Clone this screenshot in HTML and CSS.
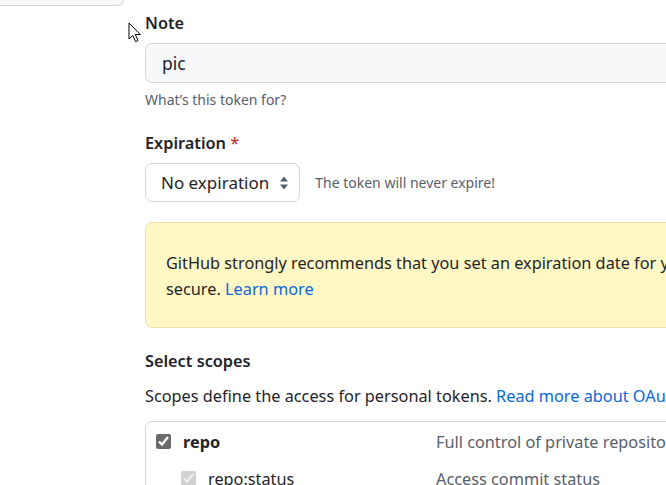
FILE: index.html
```html
<!DOCTYPE html>
<html lang="en">
<head>
<meta charset="utf-8">
<title>New personal access token</title>
<link rel="stylesheet" href="styles.css">
</head>
<body>
<div class="layout">
  <aside class="sidebar"><div class="side-menu"></div></aside>
  <main class="main">
    <div class="form-group">
      <label class="label">Note</label>
      <div class="input">pic</div>
      <p class="note">What’s this token for?</p>
    </div>
    <div class="form-group">
      <label class="label">Expiration <span class="req">*</span></label>
      <div class="exp-row">
        <div class="select">
          <span>No expiration</span>
          <svg class="sel-icon" width="10" height="16" viewBox="0 0 10 16"><path d="M5 1.5 L9 6.5 H1 Z M5 14.5 L9 9.5 H1 Z" fill="#57606a"/></svg>
        </div>
        <span class="exp-note">The token will never expire!</span>
      </div>
    </div>
    <div class="flash">GitHub strongly recommends that you set an expiration date for your token to help keep your information<br>secure. <a href="#">Learn more</a></div>
    <h3 class="scopes-title">Select scopes</h3>
    <p class="scopes-desc">Scopes define the access for personal tokens. <a href="#">Read more about OAuth scopes.</a></p>
    <div class="scopes">
      <div class="scope-row">
        <div class="scope-name"><input type="checkbox" checked class="cb"><strong>repo</strong></div>
        <div class="scope-desc">Full control of private repositories</div>
      </div>
      <div class="scope-row sub">
        <div class="scope-name"><input type="checkbox" checked disabled class="cb"><span>repo:status</span></div>
        <div class="scope-desc">Access commit status</div>
      </div>
    </div>
  </main>
</div>
<svg class="cursor" width="13" height="21" viewBox="0 0 13 21"><path d="M1 1 V17 L4.8 13.4 L7.6 19.6 L10 18.6 L7.3 12.5 H12.3 Z" fill="#fff" stroke="#000" stroke-width="1" stroke-linejoin="round"/></svg>
</body>
</html>
```
FILE: styles.css
```css
html, body {
  margin: 0;
  padding: 0;
  background: #fff;
  overflow: hidden;
}
body {
  font-family: "Segoe UI", "Noto Sans", "Liberation Sans", sans-serif;
  font-size: 16.3px;
  color: #1f2328;
  width: 666px;
  height: 485px;
  position: relative;
}
.layout {
  display: flex;
  gap: 21px;
  width: 1400px;
}
.sidebar {
  width: 124px;
  flex: none;
}
.side-menu {
  height: 5px;
  background: #f6f8fa;
  border: 1px solid #d0d7de;
  border-top: none;
  border-left: none;
  border-bottom-right-radius: 7px;
}
.main {
  width: 1000px;
  padding-top: 10px;
}
.label {
  display: block;
  font-weight: 600;
  line-height: 26px;
  margin-bottom: 7px;
}
.req {
  color: #cf222e;
  font-weight: 400;
}
.input {
  height: 38px;
  box-sizing: content-box;
  border: 1px solid #d0d7de;
  border-radius: 7px;
  background: #f6f8fa;
  padding: 0 16px;
  line-height: 38px;
  font-size: 17.5px;
}
.note {
  margin: 6px 0 0;
  font-size: 14px;
  line-height: 22px;
  color: #57606a;
  height: 41px;
}
.exp-row {
  display: flex;
  align-items: center;
  gap: 15px;
  margin-top: 2px;
}
.select {
  display: flex;
  align-items: center;
  gap: 10px;
  height: 37px;
  border: 1px solid #d0d7de;
  border-radius: 7px;
  padding: 0 10px 0 15px;
  background: #fff;
  width: fit-content;
  font-size: 17px;
}
.sel-icon {
  display: block;
}
.exp-note {
  font-size: 14px;
  color: #57606a;
}
.flash {
  margin-top: 20px;
  background: #fff8c5;
  border: 1px solid #f0dea7;
  border-radius: 7px;
  padding: 27px 20px 24px;
  line-height: 26.25px;
  white-space: nowrap;
}
a {
  color: #0969da;
  text-decoration: none;
}
.scopes-title {
  margin: 20px 0 0;
  font-size: 16.3px;
  font-weight: 600;
  line-height: 26px;
}
.scopes-desc {
  margin: 9px 0 0;
  line-height: 26px;
}
.scopes {
  margin-top: 12px;
  border: 1px solid #d0d7de;
  border-radius: 7px;
  padding: 1px 0 0;
}
.scope-row {
  display: flex;
  align-items: center;
  height: 38px;
}
.scope-row.sub {
  height: 36px;
}
.scope-name {
  box-sizing: border-box;
  width: 290px;
  display: flex;
  align-items: center;
  padding-left: 10px;
  gap: 12px;
}
.sub .scope-name {
  padding-left: 35px;
}
.cb {
  margin: 0;
  width: 15px;
  height: 15px;
  accent-color: #6a6a6a;
}
.scope-desc {
  color: #57606a;
}
.cursor {
  position: absolute;
  left: 128px;
  top: 22px;
}
```
